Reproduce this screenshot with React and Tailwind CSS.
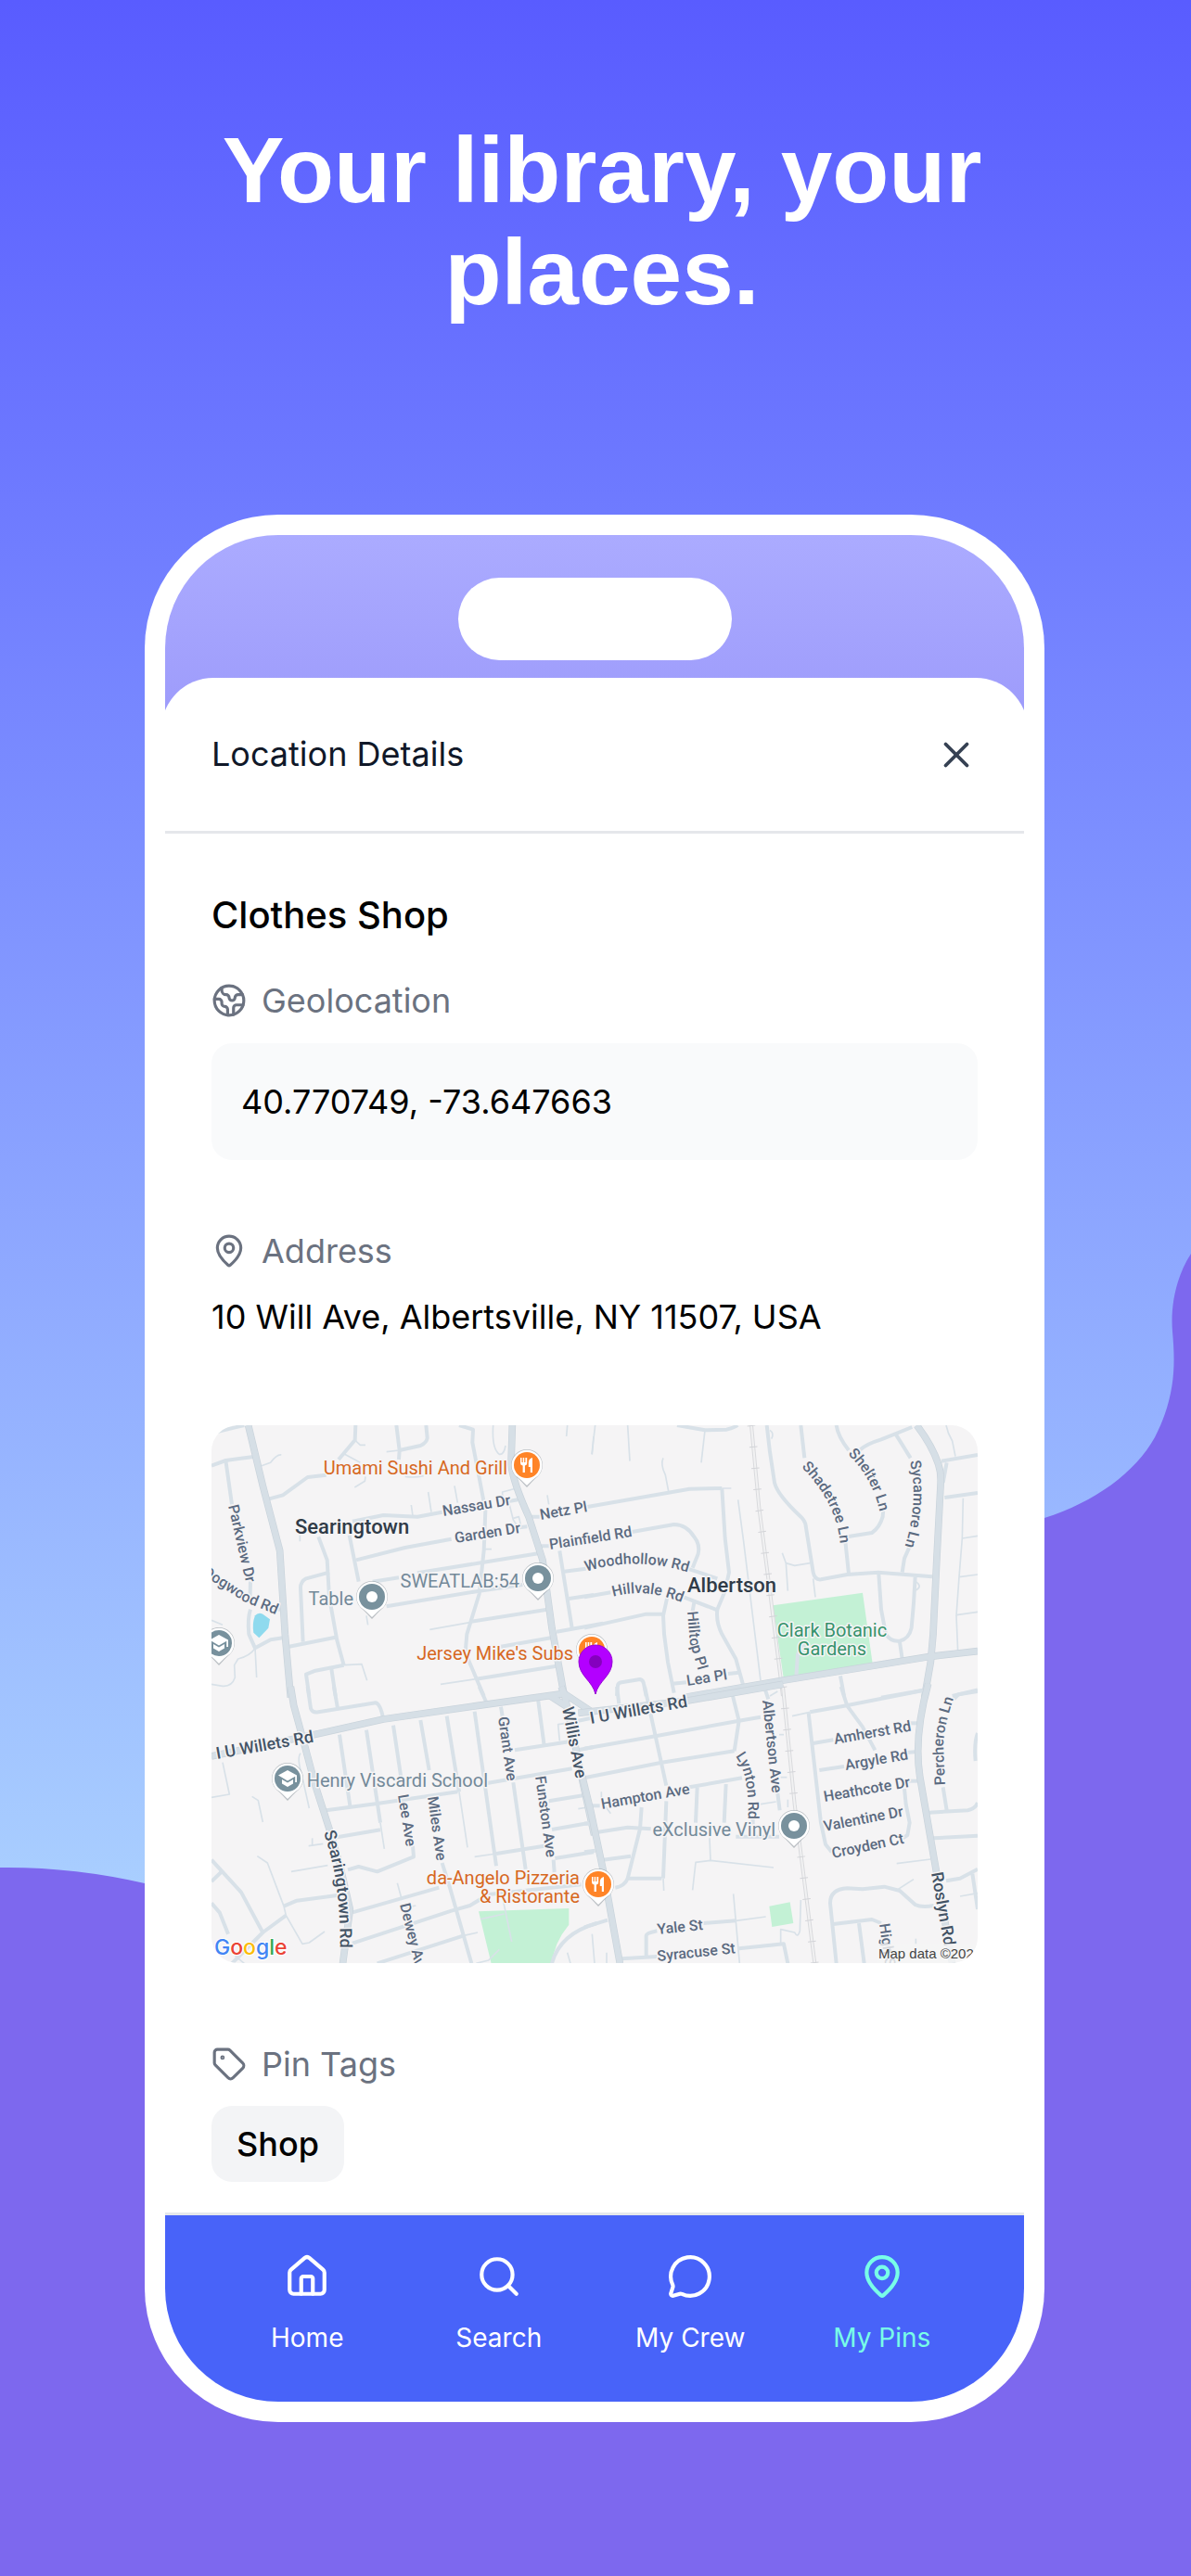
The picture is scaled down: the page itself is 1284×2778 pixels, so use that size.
import React from "react";
import { X, Earth, MapPin, Tag, House, Search, MessageCircle } from "lucide-react";

/* Road geometry, grouped by map tile. Each tile is drawn at 3x its display scale. */
const TILES = [
  {
    transform: "translate(-8 -8) scale(0.33333)",
    green: [],
    water: ["M165 640Q175 628 190 635L213 652L208 680L178 712L160 695Q155 665 165 640Z"],
    thin: [
      "M186 155L215 145Q235 118 250 120", "M488 72L505 88H522", "M455 118L505 145", "M522 190L520 205L487 225",
      "M670 282L675 317", "M725 240L735 305", "M810 220L820 275", "M310 380V400", "M525 640L530 670",
      "M965 285V240L1010 228", "M985 270L1000 330L1020 360", "M1000 325L1018 320L1025 350", "M935 24Q930 100 955 118Q970 120 975 90",
      "M1175 24L1172 60", "M1260 60L1255 118", "M1110 250L1115 280", "M165 745L170 840",
      "M165 745Q150 770 110 780L98 800L100 840Q90 870 60 868L24 862", "M24 655L60 670", "M452 800L510 797L527 850",
      "M650 190Q680 195 710 188", "M905 425H930", "M730 685L860 662", "M765 862L880 845", "M590 110L632 105",
    ],
    minor: [
      "M24 50L130 24", "M24 155L70 138L160 126", "M70 138L90 280", "M150 530L148 600", "M200 265L255 250L335 192L395 185",
      "M490 24L488 72L435 135", "M622 24L632 105L630 135", "M632 105L700 90Q720 80 722 65L718 24",
      "M825 24L870 38L868 80L895 220L910 300L905 430L890 570L850 700L845 760L905 900",
      "M480 335L580 315L690 320L770 305", "M492 460L650 420L800 392", "M470 380L500 530",
      "M370 385L398 460L405 580L430 720L452 800", "M405 500L330 520Q312 530 312 550L320 725", "M275 740L425 710",
      "M545 530L630 517", "M690 502L900 468L1085 438", "M590 610L890 560L1030 540", "M860 660L1110 620",
      "M960 740L1130 710", "M880 845L1140 803", "M1140 692L1290 665", "M1150 430L1190 680", "M1165 497L1235 488",
      "M1180 585L1260 573", "M1090 415H1115", "M1055 320H1085", "M985 270L1015 265", "M1020 355L1045 352",
      "M150 620Q140 650 145 700L165 745L215 718L255 712", "M220 618L250 620", "M340 900L330 830L360 818L452 800", "M412 812L425 900",
    ],
    major: [
      "M143 24L190 220L245 430L262 700L280 905", "M997 24L993 150Q1000 210 1050 320L1095 460L1125 680L1165 900",
    ],
    rail: [],
  },
  {
    transform: "translate(402 -8) scale(0.33333)",
    green: ["M610 607L900 566L932 795L645 848Z"],
    water: [],
    thin: [
      "M390 40L378 145", "M35 24L24 118", "M140 24L147 140", "M255 130Q245 150 262 185L272 237", "M475 228H445",
      "M497 265L515 400L570 850", "M640 437L652 470L658 560", "M652 470L680 478L730 470", "M740 520L747 580",
      "M1170 24Q1175 50 1190 75L1200 125", "M1225 260L1222 390L1212 515L1203 640L1208 755", "M1222 390L1272 382",
      "M1212 515L1272 507", "M1203 638L1272 628", "M600 900L625 885", "M600 40Q615 50 605 68", "M1072 530Q1095 545 1072 558",
    ],
    minor: [
      "M300 24L390 40L460 38Q490 30 495 24", "M10 288L340 230L445 228",
      "M445 228L455 390L468 500L455 560L430 620Q425 660 445 700L490 780L515 870",
      "M150 370L290 345Q330 345 355 385Q375 410 368 440L350 485", "M325 485L430 520", "M0 580L85 565", "M300 572L430 622",
      "M268 580L255 640L258 700L270 790L290 890", "M0 680L200 635H255", "M355 597L350 625", "M285 860L330 856", "M465 828L500 824",
      "M590 24L600 110L615 210Q625 250 700 320Q715 335 716 350L740 500Q745 525 765 523L850 507L950 500L1125 514",
      "M700 24L712 130", "M843 390L855 505", "M850 385L930 372Q955 355 965 320L967 295", "M815 24Q820 60 855 105",
      "M890 105Q910 85 960 70L1060 30", "M1005 50L1055 130", "M1055 410L1035 455L1028 500", "M1155 140L1272 120",
      "M1172 145L1160 210", "M1165 258L1272 243",
      "M952 505L960 620L975 700Q990 725 1020 722Q1050 715 1058 680L1065 600L1070 515", "M1020 725L1028 780",
      "M828 835L840 900", "M960 905L1105 880", "M1190 900L1272 880", "M105 900L108 865Q110 858 120 856L180 846Q190 848 192 860L200 900",
      "M715 720L690 765L685 840",
    ],
    major: [
      "M1075 24Q1125 90 1145 150Q1155 180 1152 220L1140 450L1128 700L1120 790L1100 905", "M320 905L640 850L1120 772L1272 755",
    ],
    rail: ["M540 24L565 290L600 560L642 900"],
  },
  {
    transform: "translate(-8 282) scale(0.33333)",
    green: ["M888 727L1180 717V770Q1130 830 1125 900H930Z"],
    water: [],
    thin: [
      "M60 245L82 348L24 358", "M155 355L175 368L190 438", "M312 215Q300 230 315 280L340 393",
      "M172 548L205 570L258 710L265 740L318 832L340 828L390 792", "M282 598L400 578", "M338 515L385 508", "M350 490V515",
      "M852 520L825 340", "M583 525L570 440", "M625 635L640 690", "M650 715L685 708", "M965 680L995 825", "M880 895L920 885L955 850", "M895 752L970 735",
      "M1175 860L1185 895", "M875 550L945 540", "M1210 395L1240 390", "M1150 175L1145 122L1170 118", "M840 805L885 795", "M100 870L130 895",
    ],
    minor: [
      "M335 0L345 70Q350 85 370 82L555 52Q570 55 580 105", "M420 0L432 70", "M890 0L912 48", "M438 155L472 385",
      "M525 140L570 440", "M612 125L638 300", "M465 592L500 582L560 598L678 550L675 515", "M700 108L728 270",
      "M770 570L795 650L865 895", "M785 95L825 340", "M875 80L945 580", "M960 65L965 95", "M1000 310L1040 590",
      "M1080 40L1100 190", "M1005 205L1180 178", "M915 312L1190 265", "M395 400L560 378L820 340", "M430 487L570 463",
      "M945 540L1100 515", "M1115 370L1225 352", "M1125 462L1240 442", "M1135 555L1260 535", "M1130 560L1133 600",
      "M1210 205L1260 195", "M1210 110L1260 100", "M258 710L300 692L430 675", "M24 560L120 665L190 795L265 740", "M190 795L90 895", "M24 630L55 600",
      "M24 700L50 730L78 800", "M480 730L760 650", "M480 830L800 725L860 708L920 672L1220 640", "M560 895L840 805",
      "M1125 895Q1150 800 1270 765",
    ],
    major: [
      "M280 0L290 60L320 170L360 320L405 460L440 580L472 720L448 900", "M24 225L355 155L580 105L880 62L1165 22",
      "M1155 0L1165 22L1190 140L1225 310L1262 480", "M1165 22L1260 85", "M1120 30L1170 62",
    ],
    rail: [],
  },
  {
    transform: "translate(402 282) scale(0.33333)",
    green: ["M598 710L665 697L676 765L607 777Z"],
    water: [],
    thin: [
      "M257 660L255 620", "M405 490L408 562", "M350 658L360 568L408 562L612 585", "M482 670L502 895", "M490 757L587 744",
      "M25 800L33 895", "M72 860V895", "M700 690L697 790Q690 815 680 795L635 785V832", "M1010 572L1120 558",
      "M1215 678L1272 668", "M1015 655L1065 623", "M1072 815V835", "M630 155H645", "M635 293H655", "M55 340V370L85 410", "M570 380L620 372",
      "M672 95L730 82", "M658 365V390",
    ],
    minor: [
      "M105 0L112 55", "M195 0L265 320", "M265 370L255 620", "M0 200L230 160L500 110L570 98", "M0 295L250 245L485 208",
      "M480 30L500 110L485 208", "M585 10L595 40", "M340 325L510 295", "M365 325L360 440", "M458 315L452 440",
      "M185 390L180 460L140 620Q130 645 100 650", "M45 470L140 455L215 460", "M60 560L150 548", "M140 620H250",
      "M490 485H630", "M625 345L632 400", "M545 420V445", "M25 385H50", "M385 765L490 757", "M500 847L645 832L658 895",
      "M200 870V805Q200 797 235 790", "M120 880L235 873", "M0 778L75 755", "M0 535L35 530", "M0 443H25", "M730 82L840 62L1095 12",
      "M725 85L765 440L780 510L800 535", "M740 183L805 172", "M760 270L840 258", "M830 0L850 62L900 130L940 205",
      "M1050 118H1080", "M1040 213L1080 210", "M1045 305H1090", "M1035 330L1040 380L1052 440L1045 480L1030 490",
      "M1195 40L1210 25L1272 15", "M1160 325L1172 400", "M1115 407L1240 400Q1265 395 1272 375", "M1272 150Q1260 180 1265 240",
      "M1130 490L1272 482", "M1170 628L1215 620L1272 590", "M1255 605L1272 720",
      "M815 895L795 700Q795 655 850 652L900 655L970 647L1020 660L1070 705Q1090 715 1130 708", "M805 768L930 753L960 765", "M888 765L905 895",
    ],
    major: [
      "M-20 85L335 45L642 -8", "M-12 270L20 400L60 590L115 895", "M1112 -10Q1065 160 1085 290L1130 550L1190 895",
    ],
    rail: ["M642 0L680 380L745 895"],
  },
];

const STREET = "#5b6a80";
const AVENUE = "#435365";

const STREETS = [
  ["Nassau Dr", 250, 98, -9.5], ["Netz Pl", 355, 102, -10], ["Garden Dr", 263, 127, -9], ["Plainfield Rd", 365, 134, -9],
  ["Parkview Dr", 18, 87, 77], ["Lea Pl", 513, 281, -9], ["Lee Ave", 201, 399, 81], ["Miles Ave", 233, 401, 82],
  ["Grant Ave", 309, 315, 82], ["Funston Ave", 349, 379, 82], ["Dewey Ave", 203, 517, 76], ["Hampton Ave", 421, 414, -10],
  ["Albertson Ave", 594, 297, 84], ["Amherst Rd", 672, 344, -10], ["Argyle Rd", 684, 372, -10], ["Heathcote Dr", 661, 406, -10],
  ["Valentine Dr", 661, 438, -11], ["Croyden Ct", 670, 467, -12], ["High St", 720, 538, 82], ["Yale St", 481, 549, -6],
  ["Syracuse St", 481, 578, -6],
];

const AVENUES = [
  ["I U Willets Rd", 6, 360, -10], ["I U Willets Rd", 409, 322, -10], ["Willis Ave", 378, 305, 79], ["Roslyn Rd", 776, 483, 80],
];

const CURVED = [
  ["Dogwood Rd", "M-10 161L35 190L84 210"],
  ["Woodhollow Rd", "M404 158Q458 140 518 160"],
  ["Hillvale Rd", "M433 185Q470 174 514 194"],
  ["Hilltop Pl", "M513 201L516 235L529 280"],
  ["Shadetree Ln", "M636 45Q678 88 678 136"],
  ["Shelter Ln", "M686 31Q714 58 722 100"],
  ["Sycamore Ln", "M753 39Q764 84 744 142"],
  ["Lynton Rd", "M565 357Q582 378 578 440"],
  ["Percheron Ln", "M791 388L789 345Q790 320 804 284"],
];

const PLACES = [
  ["Umami Sushi And Grill", 319, 53, "#d7681f"], ["Jersey Mike's Subs", 390, 253, "#d7681f"],
  ["da-Angelo Pizzeria", 397, 495, "#d7681f"], ["& Ristorante", 397, 515, "#d7681f"],
  ["SWEATLAB:54", 332, 175, "#738999"], ["Table", 153, 194, "#738999"],
  ["Henry Viscardi School", 298, 390, "#738999"], ["eXclusive Vinyl", 608, 443, "#738999"],
];

const MARKERS = [
  ["food", 340, 43], ["food", 410, 242], ["food", 417, 495], ["dot", 173, 185], ["dot", 352, 165], ["dot", 628, 432],
  ["school", 8, 235], ["school", 82, 381],
];

function Marker({ kind, x, y }) {
  return (
    <g transform={`translate(${x} ${y})`}>
      <path d="M0 24C-4 20-7 16-12 12A17 17 0 1 1 12 12C7 16 4 20 0 24Z" fill="#8b949b" opacity="0.55" />
      <path d="M0 22C-4 18-7 15-12 11.500A16.500 16.500 0 1 1 12 11.500C7 15 4 18 0 22Z" fill="#fff" />
      <circle r="14" fill={kind === "food" ? "#ff8427" : "#78919d"} />
      {kind === "dot" && <circle r="6" fill="#fff" />}
      {kind === "food" && (
        <g fill="#fff">
          <path d="M-7-8h1.500v5h1.200v-5h1.500v5h1.200v-5H.2v6q0 2-2.300 2.500V8h-2.300V.500Q-7 0-7-2Z" />
          <path d="M6-8V8H3.800V2H1.800V-3Q2-7 6-8Z" />
        </g>
      )}
      {kind === "school" && (
        <g fill="#fff">
          <path d="M0-9L10-3.500V4H8.200V-2.200L0 2.500L-10-3.500Z" />
          <path d="M-6 1L0 4.500L6 1V5.500L0 9L-6 5.500Z" />
        </g>
      )}
    </g>
  );
}

function LocationMap() {
  return (
    <svg
      viewBox="0 0 826 580"
      role="img"
      aria-label="Map around Searingtown and Albertson"
      className="mt-[94px] block w-full rounded-[28px] bg-[#f5f4f5] font-[Roboto,sans-serif]"
    >
      {TILES.map((t) => (
        <g key={t.transform} transform={t.transform} fill="none" strokeLinejoin="round">
          {t.green.map((d) => <path key={d} d={d} fill="#c3f1d5" />)}
          {t.water.map((d) => <path key={d} d={d} fill="#8fdaee" />)}
          <g stroke="#d8e1e8" strokeWidth="5">{t.thin.map((d) => <path key={d} d={d} />)}</g>
          <g stroke="#d8e1e8" strokeWidth="12">{t.minor.map((d) => <path key={d} d={d} />)}</g>
          {t.rail.map((d) => (
            <g key={d}>
              <path d={d} stroke="#d9dadd" strokeWidth="12" />
              <path d={d} stroke="#f1f1f2" strokeWidth="6" />
              <path d={d} stroke="#d3d4d8" strokeWidth="26" strokeDasharray="3 66" />
            </g>
          ))}
          <g stroke="#c9d3db" strokeWidth="23">{t.major.map((d) => <path key={d} d={d} />)}</g>
          <g stroke="#d6dfe6" strokeWidth="19">{t.major.map((d) => <path key={d} d={d} />)}</g>
        </g>
      ))}

      <g stroke="#f5f4f5" strokeWidth="3" strokeLinejoin="round" paintOrder="stroke">
        <g fontSize="16" fontWeight="500" fill={STREET}>
          {STREETS.map(([text, x, y, a]) => (
            <text key={text} transform={`translate(${x} ${y}) rotate(${a})`}>{text}</text>
          ))}
          {CURVED.map(([text, d], i) => (
            <React.Fragment key={text}>
              <path id={`curve-${i}`} d={d} fill="none" stroke="none" />
              <text><textPath href={`#curve-${i}`}>{text}</textPath></text>
            </React.Fragment>
          ))}
        </g>
        <g fontSize="18" fontWeight="500" fill={AVENUE}>
          {AVENUES.map(([text, x, y, a]) => (
            <text key={`${text}${x}`} transform={`translate(${x} ${y}) rotate(${a})`}>{text}</text>
          ))}
          <path id="searingtown-rd" d="M121 439Q142 500 138 580" fill="none" stroke="none" />
          <text><textPath href="#searingtown-rd">Searingtown Rd</textPath></text>
        </g>
        <g fontSize="20" textAnchor="end">
          {PLACES.map(([text, x, y, fill]) => <text key={text} x={x} y={y} fill={fill}>{text}</text>)}
        </g>
        <g fontSize="20" textAnchor="middle" fill="#36936c">
          <text x="669" y="228">Clark Botanic</text>
          <text x="669" y="248">Gardens</text>
        </g>
        <g fontSize="22" fontWeight="500" fill="#303b47">
          <text x="90" y="117">Searingtown</text>
          <text x="513" y="180">Albertson</text>
        </g>
      </g>

      {MARKERS.map(([kind, x, y]) => <Marker key={`${x}-${y}`} kind={kind} x={x} y={y} />)}

      <path d="M414 290C411 276 396 270 396 255A18 18 0 0 1 432 255C432 270 417 276 414 290Z" fill="#b300ff" stroke="#9500d6" />
      <circle cx="414" cy="255" r="7" fill="#8500be" />

      <rect x="717" y="559" width="109" height="21" fill="#f5f5f5" opacity="0.8" />
      <text x="719" y="575" fontSize="15" fill="#444" className="font-['Liberation_Sans',sans-serif]">Map data ©202</text>
      <text x="3" y="571" fontSize="23" fontWeight="500" stroke="#fff" strokeWidth="2" paintOrder="stroke" className="font-[Inter,sans-serif]">
        <tspan fill="#4285f4">G</tspan><tspan fill="#ea4335">o</tspan><tspan fill="#fbbc05">o</tspan>
        <tspan fill="#4285f4">g</tspan><tspan fill="#34a853">l</tspan><tspan fill="#ea4335">e</tspan>
      </text>
    </svg>
  );
}

function Backdrop() {
  return (
    <svg viewBox="0 0 1284 2778" preserveAspectRatio="none" aria-hidden="true" className="absolute inset-0 -z-10 h-full w-full">
      <path
        fill="#7d68ee"
        d="M1284 1352C1266 1380 1262 1412 1264 1436C1267 1470 1268 1505 1245 1550C1224 1588 1180 1620 1126 1637C900 1700 700 2120 156 2031Q78 2013 0 2014V2778H1284Z"
      />
    </svg>
  );
}

function SectionLabel({ icon: Icon, children, className }) {
  return (
    <h3 className={`flex items-center gap-4 text-[36px] leading-[46px] text-[#6b7280] ${className}`}>
      <Icon className="size-[38px]" strokeWidth={2} aria-hidden="true" />
      {children}
    </h3>
  );
}

const TABS = [
  { label: "Home", icon: House },
  { label: "Search", icon: Search },
  { label: "My Crew", icon: MessageCircle },
  { label: "My Pins", icon: MapPin, active: true },
];

export default function App() {
  return (
    <main className="relative isolate min-h-screen overflow-hidden bg-linear-to-b/srgb from-[#595cff] to-[#c6f8ff] pt-[128px] pr-[158px] pb-[165px] pl-[156px] font-[Inter,sans-serif]">
      <Backdrop />
      <h1 className="mx-auto max-w-[900px] pl-[16px] text-center font-['Liberation_Sans',sans-serif] text-[100px] leading-[110px] font-bold text-white">
        Your library, your places.
      </h1>

      <section className="mt-[207px] overflow-hidden rounded-[144px] bg-white p-[22px]">
        <div className="overflow-hidden rounded-[122px] bg-linear-to-b/srgb from-[#ababff] to-[#9d9bfb] bg-[length:100%_200px] bg-no-repeat pt-[46px]">
          <div className="mx-auto h-[89px] w-[295px] rounded-full bg-white" />

          <div className="-mx-1 mt-[19px] rounded-t-[56px] bg-white px-1">
            <header className="flex items-center justify-between border-b-[3px] border-gray-200 px-[50px] py-[60px]">
              <h2 className="text-[36px] leading-[45px] text-gray-900">Location Details</h2>
              <button type="button" aria-label="Close" className="-my-1 text-gray-700">
                <X className="size-[46px]" strokeWidth={2} />
              </button>
            </header>

            <div className="px-[50px] pt-[64px] pb-[33px] text-black">
              <h2 className="text-[40px] leading-[48px] font-medium">Clothes Shop</h2>
              <SectionLabel icon={Earth} className="mt-[45px]">Geolocation</SectionLabel>
              <p className="mt-[23px] rounded-[22px] bg-gray-50 px-[32px] py-[40px] text-[36px] leading-[46px]">
                40.770749, -73.647663
              </p>

              <SectionLabel icon={MapPin} className="mt-[75px]">Address</SectionLabel>
              <p className="mt-[25px] text-[36px] leading-[46px]">10 Will Ave, Albertsville, NY 11507, USA</p>

              <LocationMap />

              <SectionLabel icon={Tag} className="mt-[86px]">Pin Tags</SectionLabel>
              <span className="mt-[22px] inline-block rounded-[22px] bg-gray-100 px-[27px] py-[18px] align-top text-[36px] leading-[46px] font-medium">
                Shop
              </span>
            </div>
          </div>

          <nav className="grid grid-cols-4 border-t-[3px] border-gray-200 bg-[#4863f9] bg-clip-padding px-[50px] pt-[41px] pb-[51px]">
            {TABS.map(({ label, icon: Icon, active }) => (
              <a
                key={label}
                href="#"
                aria-current={active ? "page" : undefined}
                className={`flex flex-col items-center gap-[23px] text-[28px] leading-[36px] ${active ? "text-[#78ffe8]" : "text-white"}`}
              >
                <Icon className="size-[50px]" strokeWidth={2} aria-hidden="true" />
                {label}
              </a>
            ))}
          </nav>
        </div>
      </section>
    </main>
  );
}
